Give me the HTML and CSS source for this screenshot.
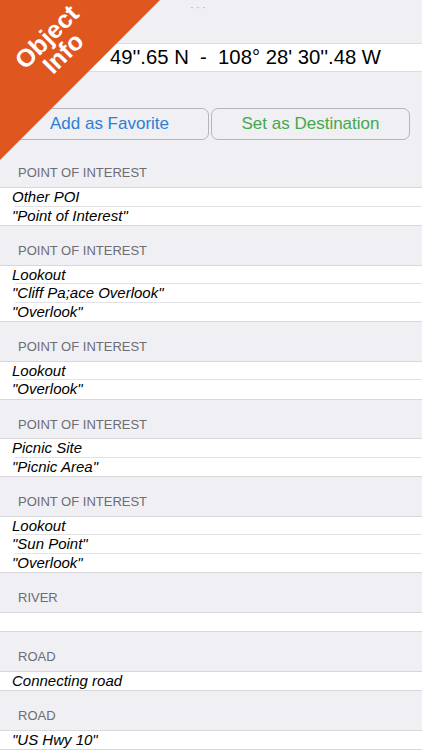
FILE: index.html
```html
<!DOCTYPE html>
<html lang="en">
  <head>
    <meta charset="UTF-8" />
    <meta name="viewport" content="width=device-width, initial-scale=1.0" />
    <title>Object Info</title>
    <link rel="stylesheet" href="styles.css">
  </head>
  <body>
    <div class="topbar"><span class="dots">· · ·</span></div>
    <div class="coords">49''.65 N&nbsp; - &nbsp;108° 28' 30''.48 W</div>

    <div class="buttons">
      <div class="btn fav">Add as Favorite</div>
      <div class="btn dest">Set as Destination</div>
    </div>

    <div class="head first">POINT OF INTEREST</div>
    <ul class="group">
      <li>Other POI</li>
      <li>"Point of Interest"</li>
    </ul>

    <div class="head">POINT OF INTEREST</div>
    <ul class="group">
      <li>Lookout</li>
      <li>"Cliff Pa;ace Overlook"</li>
      <li>"Overlook"</li>
    </ul>

    <div class="head">POINT OF INTEREST</div>
    <ul class="group">
      <li>Lookout</li>
      <li>"Overlook"</li>
    </ul>

    <div class="head">POINT OF INTEREST</div>
    <ul class="group">
      <li>Picnic Site</li>
      <li>"Picnic Area"</li>
    </ul>

    <div class="head">POINT OF INTEREST</div>
    <ul class="group">
      <li>Lookout</li>
      <li>"Sun Point"</li>
      <li>"Overlook"</li>
    </ul>

    <div class="head">RIVER</div>
    <ul class="group">
      <li></li>
    </ul>

    <div class="head">ROAD</div>
    <ul class="group">
      <li>Connecting road</li>
    </ul>

    <div class="head">ROAD</div>
    <ul class="group">
      <li>"US Hwy 10"</li>
    </ul>

    <!-- corner ribbon -->
    <div class="ribbon">
      <div class="ribbon-text">Object<br />Info</div>
    </div>
  </body>
</html>
```

FILE: styles.css
```css
* {
  padding: 0;
  margin: 0;
  box-sizing: border-box;
}
body {
  background-color: #efeff4;
  font-family: "Liberation Sans", Arial, sans-serif;
  color: #000;
  overflow: hidden;
}
li {
  list-style: none;
}
.topbar {
  height: 43px;
  padding-top: 2px;
  text-align: center;
  font-size: 10px;
  line-height: 12px;
  color: #9a9aa0;
}
.dots {
  display: inline-block;
  margin-left: -26px;
}
.coords {
  height: 29px;
  background-color: #fff;
  border-top: 1px solid #dcdce0;
  border-bottom: 1px solid #dcdce0;
  padding-left: 110px;
  font-size: 20.3px;
  line-height: 27px;
  white-space: nowrap;
}
.buttons {
  display: flex;
  gap: 2px;
  padding: 36px 12px 0 10px;
}
.btn {
  flex: 1;
  height: 32px;
  border: 1px solid #b4b4ba;
  border-radius: 7px;
  font-size: 17px;
  line-height: 30px;
  text-align: center;
}
.fav {
  color: #2c80d3;
}
.dest {
  color: #45a84a;
}
.head {
  height: 38.5px;
  padding: 17px 0 0 18px;
  font-size: 13px;
  line-height: 16px;
  color: #6d6d72;
}
.head.first {
  height: 47px;
  padding-top: 25px;
}
.group {
  background-color: #fff;
  border-top: 1px solid #d8d8dc;
  border-bottom: 1px solid #d8d8dc;
}
.group li {
  height: 18.5px;
  padding-left: 12px;
  font-size: 15px;
  line-height: 17px;
  font-style: italic;
  white-space: nowrap;
  background-image: linear-gradient(#e2e2e6, #e2e2e6);
  background-repeat: no-repeat;
  background-size: calc(100% - 15px) 1px;
  background-position: 15px 100%;
}
.group li:last-child {
  background-image: none;
}
.ribbon {
  position: absolute;
  top: 0;
  left: 0;
  width: 160px;
  height: 160px;
  background-color: #e0561f;
  clip-path: polygon(0 0, 100% 0, 0 100%);
}
.ribbon-text {
  position: absolute;
  left: 55px;
  top: 45px;
  transform: translate(-50%, -50%) rotate(-45deg);
  color: #fff;
  font-weight: bold;
  font-size: 25px;
  line-height: 23px;
  text-align: center;
  white-space: nowrap;
}
```
